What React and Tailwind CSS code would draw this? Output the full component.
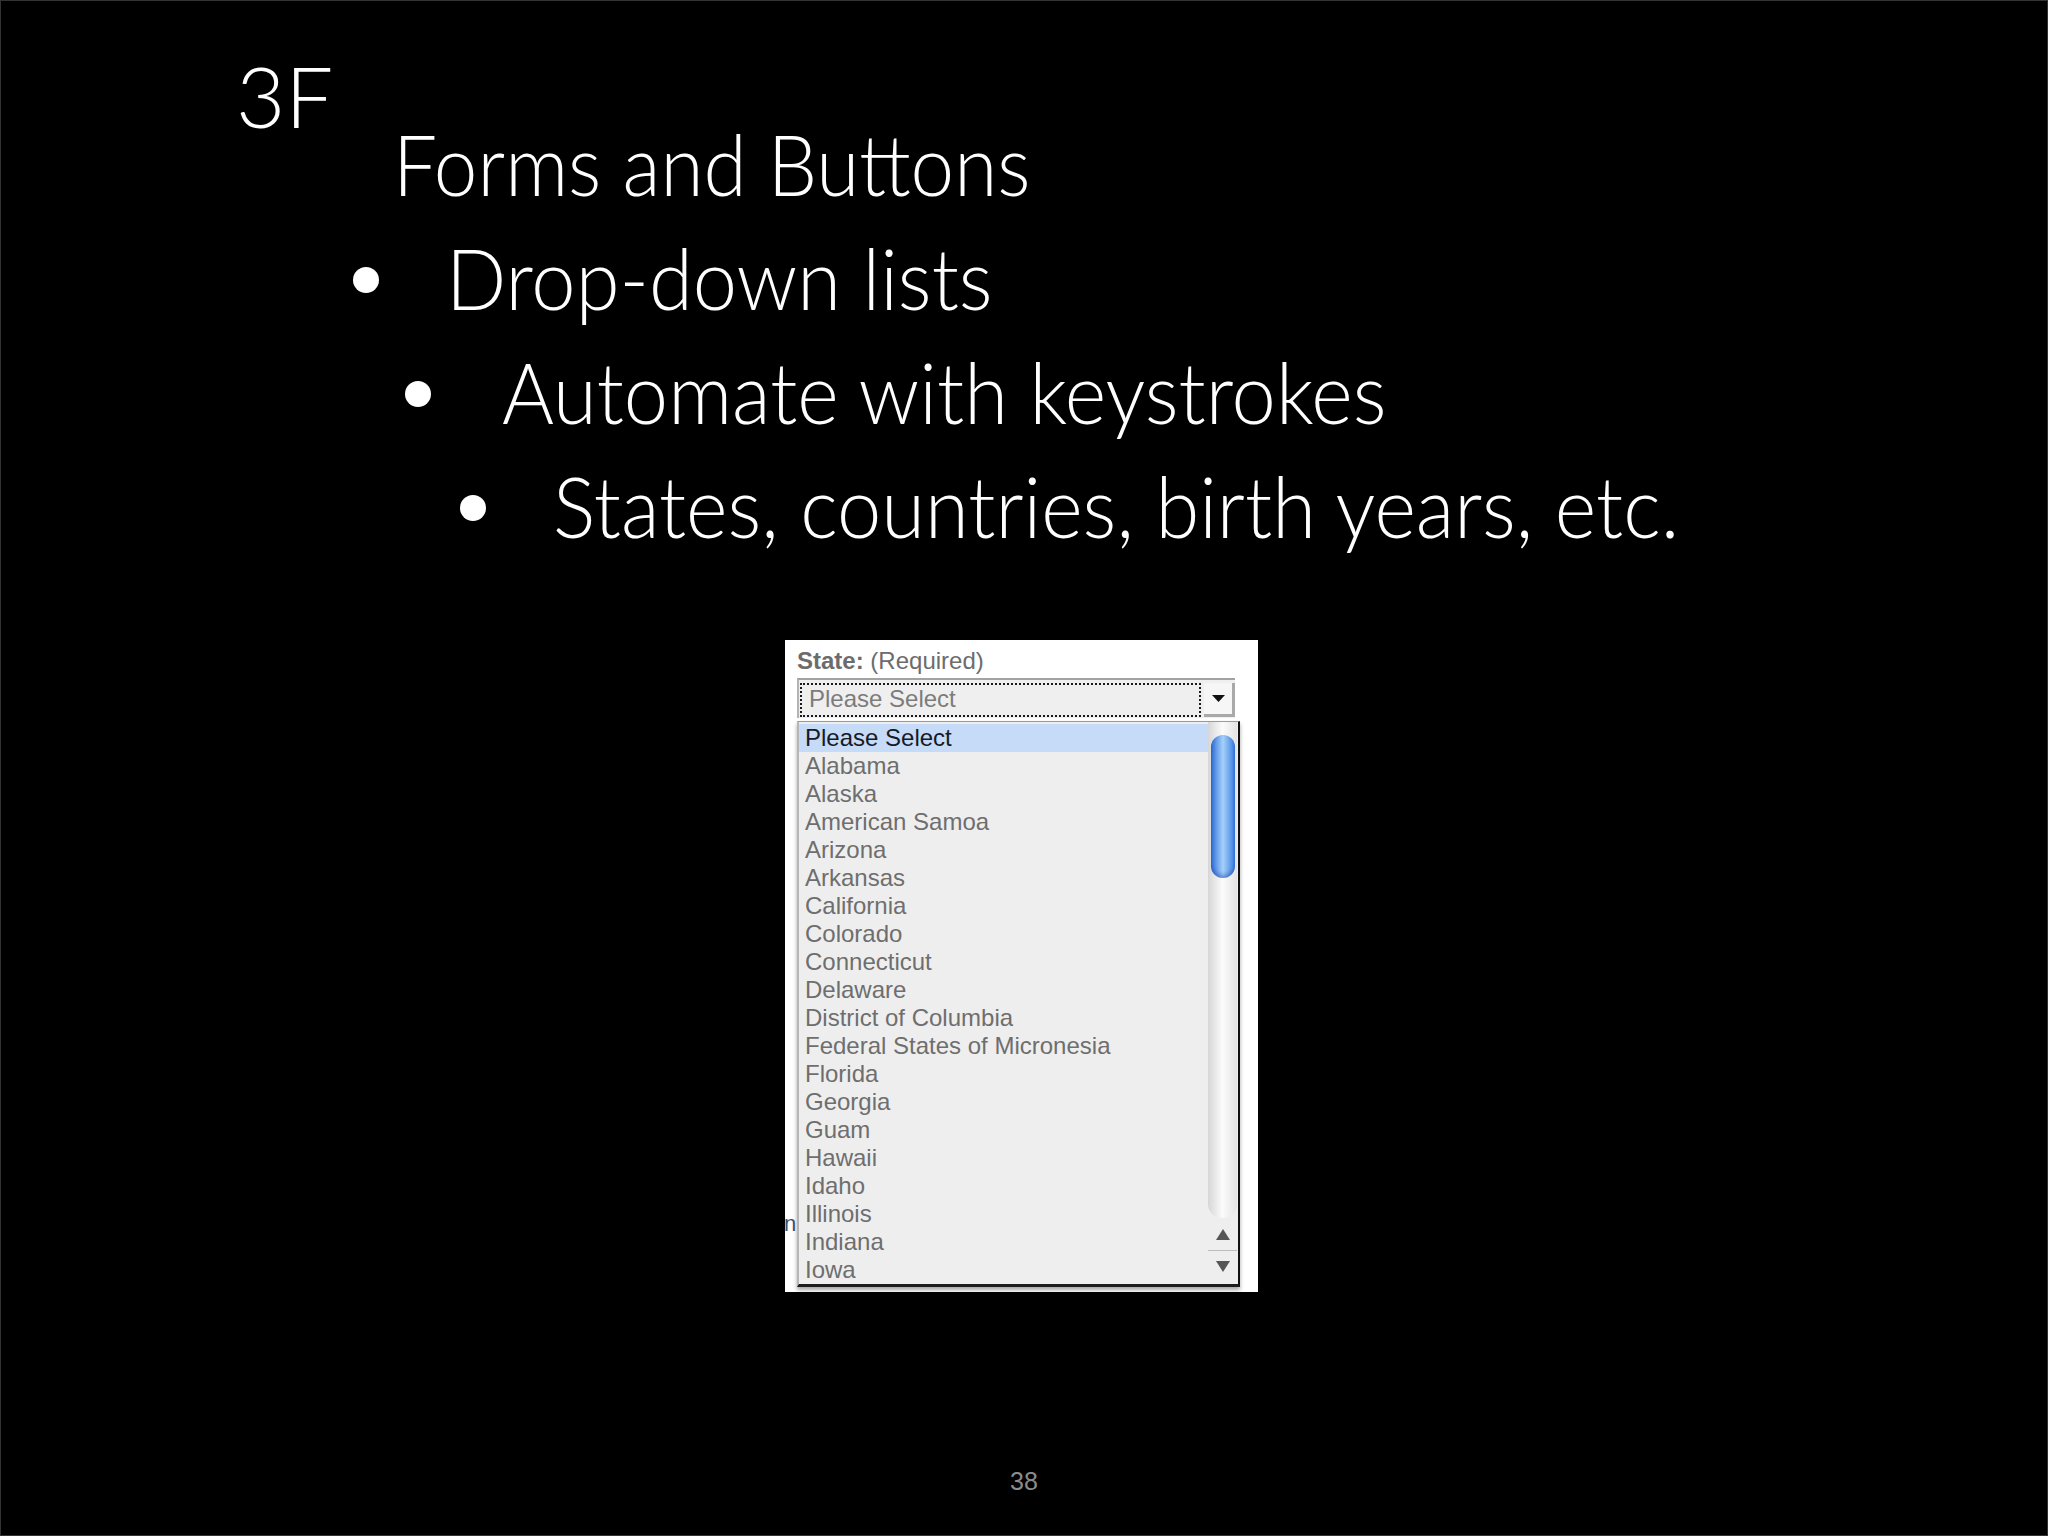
import React from 'react'

const states = [
  'Please Select',
  'Alabama',
  'Alaska',
  'American Samoa',
  'Arizona',
  'Arkansas',
  'California',
  'Colorado',
  'Connecticut',
  'Delaware',
  'District of Columbia',
  'Federal States of Micronesia',
  'Florida',
  'Georgia',
  'Guam',
  'Hawaii',
  'Idaho',
  'Illinois',
  'Indiana',
  'Iowa',
]

function Bullet({ indent, gap, children }) {
  return (
    <div className="flex leading-[114px]" style={{ paddingLeft: indent }}>
      <div className="shrink-0" style={{ width: gap }}>
        <div className="mt-[47px] w-[26px] h-[26px] rounded-full bg-white" />
      </div>
      <div className="origin-left scale-x-[0.935] whitespace-nowrap">{children}</div>
    </div>
  )
}

function StateSelect() {
  return (
    <div className="relative ml-[784px] w-[473px] h-[652px] bg-white pt-[7px] pl-[12px] font-['Liberation_Sans',Arial,sans-serif]">
      {/* label */}
      <div className="text-[24px] leading-[28px] text-[#6c6c6c]">
        <span className="font-bold">State:</span> (Required)
      </div>

      {/* closed select */}
      <div className="mt-[3px] w-[438px] h-[40px] flex bg-[#efefef] border-t-2 border-t-[#a3a3a3] border-l-2 border-l-[#b3b3b3]">
        <div className="ml-[1px] mt-[3px] mb-[1px] w-[401px] border-2 border-dotted border-[#1a1a1a] pl-[7px] text-[24px] leading-[28px] text-[#7c7c7c]">
          Please Select
        </div>
        <div className="ml-[3px] mt-[3px] mb-[1px] w-[31px] flex items-center justify-center bg-[#f6f6f6] border-r-[3px] border-b-[3px] border-[#a9a9a9]">
          <svg width="13" height="7" viewBox="0 0 13 7">
            <path d="M0 0 H13 L6.5 7 Z" fill="#111" />
          </svg>
        </div>
      </div>

      {/* open list */}
      <div className="relative mt-[3px] w-[443px] h-[566px] flex bg-[#eeeeee] border-t border-t-[#9b9b9b] border-l-2 border-l-[#b6b6b6] border-r-2 border-r-[#111111] border-b-[3px] border-b-[#1c1c1c] shadow-[0_3px_4px_rgba(0,0,0,0.35)]">
        <div className="w-[409px] pt-[2px] text-[24px] leading-[28px] text-[#6e6e6e]">
          {states.map((s, i) => (
            <div
              key={s}
              className={i === 0 ? 'h-[28px] pl-[6px] bg-[#c6dbf7] text-[#161a26]' : 'h-[28px] pl-[6px]'}
            >
              {s}
            </div>
          ))}
        </div>

        {/* scrollbar */}
        <div className="w-[29px] flex flex-col">
          <div className="h-[496px] bg-gradient-to-r from-[#d6d6d6] via-[#fbfbfb] to-[#e4e4e4] rounded-b-[14px] pt-[13px] pl-[3px]">
            <div className="w-[24px] h-[143px] rounded-full bg-gradient-to-r from-[#2f70d8] via-[#a6d0fa] to-[#3a7fe0] shadow-[inset_0_-3px_4px_rgba(20,60,160,0.45)]" />
          </div>
          <div className="h-[32px] flex items-center justify-center">
            <svg width="14" height="11" viewBox="0 0 14 11">
              <path d="M7 0 L14 11 H0 Z" fill="#555" />
            </svg>
          </div>
          <div className="h-px bg-[#bdbdbd]" />
          <div className="h-[31px] flex items-center justify-center">
            <svg width="14" height="11" viewBox="0 0 14 11">
              <path d="M0 0 H14 L7 11 Z" fill="#555" />
            </svg>
          </div>
        </div>
      </div>

      {/* text of the page behind the menu */}
      <div className="absolute left-[-1px] top-[571px] text-[22px] leading-[26px] text-[#3e4f72]">n</div>
    </div>
  )
}

export default function App() {
  return (
    <div className="w-[2048px] h-[1536px] bg-black border border-[#333333] flex flex-col text-white font-['Lato','Open_Sans',sans-serif] font-light">
      <div className="mt-[52px] h-[53px] pl-[235px] text-[85px] leading-[85px]">3F</div>
      <div className="text-[85px]">
        <div className="pl-[392px] leading-[114px]">
          <div className="origin-left scale-x-[0.92] whitespace-nowrap">Forms and Buttons</div>
        </div>
        <Bullet indent={352} gap={93}>Drop-down lists</Bullet>
        <Bullet indent={404} gap={97}>Automate with keystrokes</Bullet>
        <Bullet indent={459} gap={93}>States, countries, birth years, etc.</Bullet>
      </div>

      <div className="mt-[78px]">
        <StateSelect />
      </div>

      <div className="mt-[174px] text-center text-[25px] leading-[30px] text-[#8c8c8c] font-['Liberation_Sans',Arial,sans-serif] font-normal">
        38
      </div>
    </div>
  )
}
